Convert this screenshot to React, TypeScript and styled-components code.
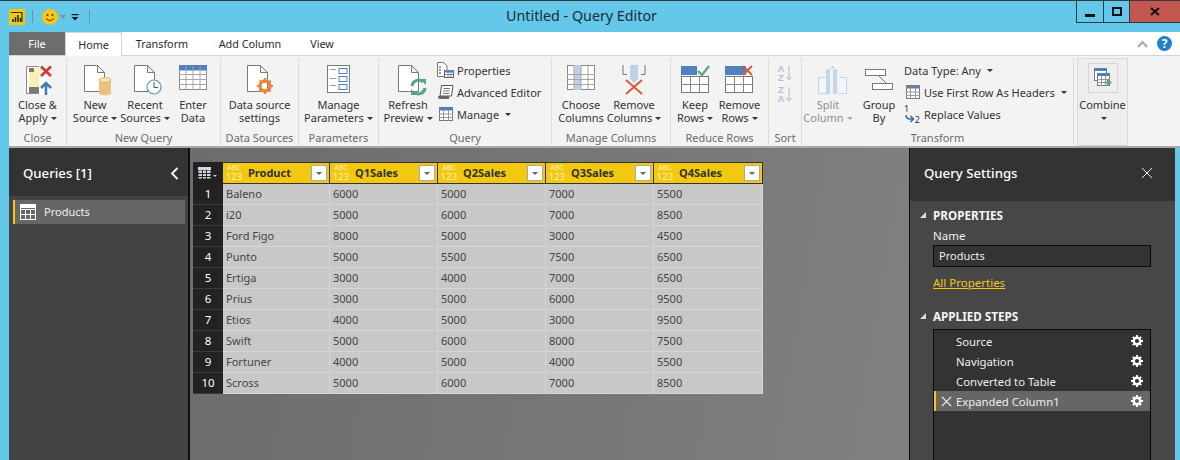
import React from "react";
import styled, { createGlobalStyle } from "styled-components";

const GlobalStyle = createGlobalStyle`
  html, body { margin: 0; padding: 0; height: 460px; overflow: hidden; background: #63c8ea; }
  body { font-family: "Noto Sans", "Open Sans", sans-serif; font-size: 12px; }
  * { box-sizing: border-box; }
`;

const Window = styled.div`
  width: 1180px;
  height: 460px;
  display: flex;
  flex-direction: column;
  overflow: hidden;
  background: #63c8ea;
  border-top: 1px solid #3a3a3a;
  padding-left: 9px;
`;
const TitleBar = styled.div`
  height: 31px;
  flex: none;
  display: flex;
  align-items: flex-start;
  position: relative;
`;
const QuickAccess = styled.div`
  width: 90px;
  height: 31px;
  display: flex;
  align-items: center;
`;
const QuickSep = styled.div<{ $m: number }>`
  width: 1px;
  height: 13px;
  margin-left: ${(p) => p.$m}px;
  background: #6b8f9d;
`;
const SmileySlot = styled.div`
  margin-left: 9px;
  display: flex;
`;
const QuickCaret = styled.span`
  margin-left: 2px;
  width: 0;
  height: 0;
  border-left: 3.5px solid transparent;
  border-right: 3.5px solid transparent;
  border-top: 4px solid #7d8f98;
`;
const CustomizeSlot = styled.div`
  margin-left: 5px;
  display: flex;
`;
const Title = styled.div`
  position: absolute;
  left: 497px;
  top: 3px;
  font-size: 14.3px;
  line-height: 24px;
  color: #1d2b33;
`;
const WinControls = styled.div`
  margin-left: auto;
  display: flex;
  height: 22px;
  border-left: 1px solid #2c3a40;
  border-bottom: 1px solid #2c3a40;
`;
const WinButton = styled.div<{ $w: number; $bg?: string }>`
  width: ${(p) => p.$w}px;
  background: ${(p) => p.$bg || "transparent"};
  border-right: 1px solid #2c3a40;
  display: flex;
  align-items: center;
  justify-content: center;
  &:last-child { border-right: none; }
`;
const Tabs = styled.div`
  height: 24px;
  flex: none;
  background: #fff;
  display: flex;
  align-items: stretch;
  border-bottom: 1px solid #d2d2d2;
  position: relative;
`;
const FileTab = styled.div`
  width: 56px;
  height: 23px;
  background: #6d6d6d;
  color: #fff;
  display: flex;
  align-items: center;
  justify-content: center;
  font-size: 10.8px;
`;
const Tab = styled.div<{ $active?: boolean; $w: number }>`
  width: ${(p) => p.$w}px;
  height: ${(p) => (p.$active ? "24px" : "23px")};
  display: flex;
  align-items: center;
  justify-content: center;
  font-size: 10.8px;
  color: #2b2b2b;
  background: #fff;
  z-index: 1;
  border: ${(p) => (p.$active ? "1px solid #d2d2d2" : "none")};
  border-bottom: none;
`;
const TabEnd = styled.div`
  margin-left: auto;
  display: flex;
  align-items: center;
  gap: 8px;
  padding-right: 8px;
`;
const HelpIcon = styled.div`
  width: 15px;
  height: 15px;
  border-radius: 50%;
  background: #1f7fd1;
  color: #fff;
  font-size: 12px;
  font-weight: 700;
  line-height: 15px;
  text-align: center;
`;
const Ribbon = styled.div`
  height: 92px;
  flex: none;
  background: #f3f3f3;
  border-bottom: 2px solid #a8a8a8;
  display: flex;
  padding-top: 2px;
`;
const Group = styled.div<{ $w: number }>`
  width: ${(p) => p.$w}px;
  flex: none;
  height: 87px;
  display: flex;
  flex-direction: column;
  border-right: 1px solid #dcdcdc;
`;
const GroupBody = styled.div`
  flex: 1;
  display: flex;
  min-height: 0;
`;
const GroupLabel = styled.div`
  height: 15px;
  line-height: 15px;
  text-align: center;
  font-size: 11px;
  color: #6a6a6a;
  white-space: nowrap;
`;
const BigButton = styled.div<{ $w: number; $disabled?: boolean }>`
  width: ${(p) => p.$w}px;
  flex: none;
  display: flex;
  flex-direction: column;
  align-items: center;
  font-size: 11px;
  line-height: 13px;
  color: ${(p) => (p.$disabled ? "#8f8f8f" : "#333")};
  white-space: nowrap;
  text-align: center;
`;
const IconSlot = styled.div<{ $nudge?: number }>`
  height: 40px;
  padding-top: 7px;
  padding-left: ${(p) => p.$nudge || 0}px;
  flex: none;
  display: flex;
  justify-content: center;
  align-items: flex-start;
`;
const Caret = styled.span<{ $light?: boolean }>`
  display: inline-block;
  width: 0;
  height: 0;
  margin-left: 3px;
  vertical-align: 2px;
  border-left: 3px solid transparent;
  border-right: 3px solid transparent;
  border-top: 3px solid ${(p) => (p.$light ? "#aaa" : "#333")};
`;
const SmallColumn = styled.div<{ $w: number }>`
  width: ${(p) => p.$w}px;
  flex: none;
  display: flex;
  flex-direction: column;
  padding-top: 1px;
`;
const SmallButton = styled.div`
  height: 22px;
  display: flex;
  align-items: center;
  gap: 3px;
  font-size: 11px;
  color: #333;
  white-space: nowrap;
`;
const SmallIcon = styled.div`
  width: 17px;
  height: 17px;
  flex: none;
  display: flex;
  align-items: center;
  justify-content: center;
`;
const ReplaceIcon = styled.div`
  width: 17px;
  height: 20px;
  position: relative;
  flex: none;
  font-size: 9px;
  line-height: 9px;
  color: #333;
`;
const ReplaceOne = styled.span`
  position: absolute;
  left: 0;
  top: 0;
`;
const ReplaceTwo = styled.span`
  position: absolute;
  right: 1px;
  bottom: 0;
`;
const SortStack = styled.div`
  display: flex;
  flex-direction: column;
  gap: 1px;
  padding: 5px 0 0 8px;
`;
const SortRow = styled.div`
  height: 20px;
  display: flex;
  gap: 1px;
  align-items: center;
`;
const SortLetters = styled.div`
  width: 8px;
  font-family: "Liberation Sans", Arial, sans-serif;
  font-size: 9.5px;
  line-height: 9.5px;
  font-weight: 700;
  color: #b3c0d2;
  text-align: center;
`;
const CombineBox = styled.div`
  width: 51px;
  height: 88px;
  margin-left: 3px;
  background: #eeeeee;
  border: 1px solid #d8d8d8;
  display: flex;
  flex-direction: column;
  align-items: center;
  font-size: 11px;
  line-height: 13px;
  color: #333;
`;
const CombineIcon = styled.div`
  width: 30px;
  height: 30px;
  margin: 4px 0 5px;
  border: 1px solid #d4d4d4;
  display: flex;
  align-items: center;
  justify-content: center;
`;
const Body = styled.div`
  flex: 1;
  min-height: 0;
  display: flex;
  margin-right: 5px;
`;
const LeftPane = styled.div`
  width: 181px;
  flex: none;
  background: #444;
  border-right: 2px solid #0e0e0e;
`;
const PaneHeader = styled.div<{ $h: number; $pad: number }>`
  height: ${(p) => p.$h}px;
  background: #333;
  color: #fff;
  font-size: 13.2px;
  font-weight: 500;
  line-height: 20px;
  display: flex;
  align-items: flex-start;
  justify-content: space-between;
  padding: 15px ${(p) => p.$pad}px 0 14px;
  svg { margin-top: 4px; }
`;
const QueryItem = styled.div`
  margin: 4px 3px 0 4px;
  height: 24px;
  background: #666;
  border-left: 2px solid #f2c811;
  color: #eee;
  font-size: 11px;
  display: flex;
  align-items: center;
  gap: 8px;
  padding: 0 0 1px 5px;
`;
const Center = styled.div`
  width: 719px;
  flex: none;
  background: linear-gradient(100deg, #6c6c6c, #808080);
  padding: 14px 0 0 3px;
`;
const Grid = styled.div`
  width: 570px;
  display: grid;
  grid-template-columns: 30px 107px 108px 108px 108px 109px;
  grid-template-rows: 22px repeat(10, 21px);
`;
const Corner = styled.div`
  background: #222;
  display: flex;
  align-items: center;
  justify-content: center;
`;
const HeadCell = styled.div`
  background: #f2c811;
  border-right: 1px solid #333;
  border-top: 1px solid #333;
  border-bottom: 1px solid #333;
  display: flex;
  align-items: center;
  padding: 0 2px 0 2px;
  color: #333;
  font-size: 11px;
  font-weight: 700;
`;
const HeadText = styled.span`
  margin-top: -2px;
`;
const TypeBadge = styled.div`
  width: 18px;
  flex: none;
  color: #fdf3b8;
  text-align: center;
  margin-right: 5px;
`;
const TypeAbc = styled.div`
  font-size: 7px;
  line-height: 8px;
  font-weight: 400;
`;
const Type123 = styled.div`
  font-size: 9.5px;
  line-height: 10px;
  font-weight: 400;
`;
const FilterButton = styled.div`
  margin-left: auto;
  width: 16px;
  height: 16px;
  background: #fff;
  border: 1px solid #a8a8a8;
  display: flex;
  align-items: center;
  justify-content: center;
  &::after {
    content: "";
    border-left: 3px solid transparent;
    border-right: 3px solid transparent;
    border-top: 3px solid #666;
  }
`;
const RowNum = styled.div`
  background: #222;
  color: #fff;
  font-size: 11.5px;
  display: flex;
  align-items: center;
  justify-content: center;
  padding-bottom: 1px;
  border-bottom: 1px solid #3a3a3a;
`;
const Cell = styled.div`
  background: #c8c8c8;
  color: #444;
  font-size: 11px;
  display: flex;
  align-items: center;
  padding: 0 0 1px 3px;
  border-right: 1px solid #d6d6d6;
  border-bottom: 1px solid #d6d6d6;
`;
const RightPane = styled.div`
  flex: 1;
  background: #474747;
  border-left: 1px solid #0e0e0e;
  color: #fff;
`;
const SettingsBody = styled.div`
  padding: 6px 24px 0 10px;
`;
const SectionTitle = styled.div`
  display: flex;
  align-items: center;
  gap: 7px;
  height: 16px;
  font-size: 11.7px;
  font-weight: 700;
  color: #f4f4f4;
`;
const SectionArrow = styled.span`
  width: 0;
  height: 0;
  border-left: 6px solid transparent;
  border-bottom: 6px solid #ddd;
`;
const Indented = styled.div`
  margin-left: 13px;
`;
const NameLabel = styled.div`
  margin-top: 4px;
  height: 18px;
  line-height: 18px;
  font-size: 11.5px;
  color: #eee;
`;
const NameInput = styled.div`
  width: 218px;
  height: 22px;
  border: 1px solid #0b0b0b;
  background: #333;
  padding-left: 5px;
  line-height: 20px;
  font-size: 11px;
  color: #eee;
`;
const PropsLink = styled.div`
  margin: 7px 0 16px;
  height: 18px;
  line-height: 18px;
  font-size: 11.5px;
  color: #f2c811;
  text-decoration: underline;
`;
const StepList = styled.div`
  width: 218px;
  height: 140px;
  margin-top: 5px;
  border: 1px solid #0b0b0b;
  background: #333;
  padding-top: 1px;
`;
const Step = styled.div<{ $selected?: boolean }>`
  height: 20px;
  display: flex;
  align-items: center;
  font-size: 11.3px;
  color: #eee;
  padding-right: 7px;
  background: ${(p) => (p.$selected ? "#666" : "transparent")};
  border-left: 2px solid ${(p) => (p.$selected ? "#f2c811" : "transparent")};
`;
const StepIcon = styled.div`
  width: 20px;
  flex: none;
  display: flex;
  justify-content: center;
`;
const StepGear = styled.span`
  margin-left: auto;
  display: flex;
`;

const Page = ({ x = 0, w = 21, h = 27 }: { x?: number; w?: number; h?: number }) => (
  <path
    d={`M${x + 0.5} 0.5H${x + w - 7.5}L${x + w - 0.5} 7.5V${h - 0.5}H${x + 0.5}ZM${x + w - 7.5} 0.5V7.5H${x + w - 0.5}`}
    fill="#fff"
    stroke="#7a7a7a"
  />
);

const CloseApplyIcon = () => (
  <svg width="27" height="31" viewBox="0 0 27 31">
    <path d="M13 1.500H0.500V28.500H13" fill="#fff" stroke="#8a8a8a" />
    <path d="M3 3H13V13L20 18V22H3Z" fill="#fdeeb5" />
    <path d="M13 12L24 17V30H13Z" fill="#fff" />
    <rect x="3" y="3" width="5" height="4" fill="#7a7a7a" />
    <rect x="3" y="22" width="10" height="6" fill="#7a7a7a" />
    <path d="M15 1.500L25 11M25 1.500L15 11" stroke="#cf3a33" strokeWidth="2.600" />
    <path d="M20 30V18M15 23L20 18L25 23" fill="none" stroke="#3f7cb5" strokeWidth="2.600" />
  </svg>
);
const NewSourceIcon = () => (
  <svg width="28" height="31" viewBox="0 0 28 31">
    <Page />
    <path d="M15 15H27V28C27 31 15 31 15 28Z" fill="#e8c27e" />
    <ellipse cx="21" cy="15" rx="6" ry="2.400" fill="#f6e1b4" stroke="#e0b669" />
  </svg>
);
const RecentIcon = () => (
  <svg width="28" height="31" viewBox="0 0 28 31">
    <Page />
    <circle cx="20" cy="22" r="7" fill="#fff" stroke="#5a93c6" strokeWidth="1.200" />
    <path d="M20 17V22.500H24" fill="none" stroke="#555" />
  </svg>
);
const TableIcon = ({ head = "#4f81bd", col }: { head?: string; col?: boolean }) => (
  <svg width="29" height="26" viewBox="0 0 29 26">
    <rect x="0.500" y="0.500" width="27" height="24" fill="#fff" stroke="#8a8a8a" />
    {col && <rect x="7" y="0" width="7" height="25" fill="#bcd2e8" />}
    {!col && <rect x="0" y="0" width="28" height="5.500" fill={head} />}
    <path d="M0 9.500H28M0 14.500H28M0 19.500H28M7 1V25M14 1V25M21 1V25" stroke="#a5a5a5" />
  </svg>
);
const DataSourceIcon = () => (
  <svg width="30" height="30" viewBox="0 0 30 30">
    <Page />
    <circle cx="18" cy="21" r="5" fill="none" stroke="#e8873a" strokeWidth="3.400" />
    <path d="M18 13V29M10 21H26M12.500 15.500L23.500 26.500M23.500 15.500L12.500 26.500" stroke="#e8873a" strokeWidth="2" strokeDasharray="2.500 11" />
  </svg>
);
const ParamsIcon = () => (
  <svg width="24" height="28" viewBox="0 0 24 28">
    <rect x="0.500" y="0.500" width="22" height="27" fill="#fff" stroke="#7a7a7a" />
    <path d="M3 4.500H9M3 13.500H9M3 20.500H9" stroke="#999" />
    <rect x="12" y="3.500" width="8" height="5" fill="#fff" stroke="#4f81bd" />
    <rect x="12" y="11.500" width="8" height="5" fill="#fff" stroke="#4f81bd" />
    <rect x="12" y="19.500" width="8" height="5" fill="#fff" stroke="#4f81bd" />
  </svg>
);
const RefreshIcon = () => (
  <svg width="29" height="31" viewBox="0 0 29 31">
    <Page />
    <path d="M14 21A6.500 6.500 0 0 1 25 17M27 23A6.500 6.500 0 0 1 16 27" fill="none" stroke="#52a58a" strokeWidth="3" />
    <path d="M22 14H28V20ZM19 30H13V24Z" fill="#52a58a" />
  </svg>
);
const PropertiesIcon = () => (
  <svg width="17" height="16" viewBox="0 0 17 16">
    <path d="M0.500 0.500H6.500L10 4V14.500H0.500Z" fill="#fff" stroke="#777" />
    <path d="M2 5H4M2 8H4M2 11H4" stroke="#777" strokeWidth="1.400" />
    <rect x="7.500" y="8.500" width="9" height="7" fill="#fff" stroke="#666" />
    <rect x="7" y="8" width="10" height="2.500" fill="#4f81bd" />
    <path d="M11 9V15M14 9V15M8 12.500H16" stroke="#888" />
  </svg>
);
const EditorIcon = () => (
  <svg width="16" height="16" viewBox="0 0 16 16">
    <path d="M3.500 1.500H15L13.500 12H2Z" fill="#fff" stroke="#555" />
    <path d="M5.500 4.500H12M5 7H11.500M5 9.500H11" stroke="#777" />
    <path d="M0 12H11V15H2Q0 15 0 13Z" fill="#666" />
  </svg>
);
const MiniTable = ({ head = "#4f81bd" }: { head?: string }) => (
  <svg width="14" height="14" viewBox="0 0 14 14">
    <rect x="0.500" y="0.500" width="13" height="13" fill="#fff" stroke="#777" />
    <rect x="0" y="0" width="14" height="3.500" fill={head} />
    <path d="M0 7H14M0 10.500H14M4.500 3V14M9.500 3V14" stroke="#999" />
  </svg>
);
const RemoveColumnsIcon = () => (
  <svg width="24" height="30" viewBox="0 0 24 30">
    <path d="M1 0V9.500H5M23 0V9.500H19" fill="none" stroke="#777" />
    <path d="M8 0H16V14L12 18L8 14Z" fill="#bcd2e8" />
    <path d="M4 15L20 29M20 15L4 29" stroke="#d95b3a" strokeWidth="2" />
  </svg>
);
const RowsIcon = ({ remove }: { remove?: boolean }) => (
  <svg width="29" height="29" viewBox="0 0 29 29">
    <rect x="0" y="1" width={remove ? 21 : 16} height="9" fill="#4f81bd" />
    <rect x="0.500" y="11.500" width="27" height="16" fill="#fff" stroke="#777" />
    <path d="M0 19.500H28M9.500 12V28M18.500 12V28" stroke="#888" />
    {remove ? (
      <path d="M18 1L27 10M27 1L18 10" stroke="#d95b3a" strokeWidth="2" />
    ) : (
      <path d="M17 6L21 10L28 1" fill="none" stroke="#5da58c" strokeWidth="2.400" />
    )}
  </svg>
);
const SortArrow = () => (
  <svg width="6" height="15" viewBox="0 0 6 15">
    <path d="M3 0V14M0.500 11L3 14L5.500 11" fill="none" stroke="#aebccf" />
  </svg>
);
const SplitIcon = () => (
  <svg width="29" height="29" viewBox="0 0 29 29">
    <path d="M14.500 1L18 4H11Z" fill="#c4c4c4" />
    <rect x="0.500" y="12.500" width="28" height="16" fill="#f1f6fc" stroke="#c4d4e4" />
    <rect x="8.500" y="3" width="12" height="26" fill="#f3f3f3" />
    <rect x="8" y="4" width="4" height="25" fill="#c4d6e8" />
    <rect x="15" y="4" width="4" height="25" fill="#c4d6e8" />
  </svg>
);
const GroupIcon = () => (
  <svg width="29" height="26" viewBox="0 0 29 26">
    <rect x="0.500" y="4.500" width="20" height="6" fill="#fff" stroke="#777" />
    <rect x="7.500" y="18.500" width="20" height="6" fill="#fff" stroke="#777" />
    <path d="M14 11L21 18" stroke="#777" />
  </svg>
);
const CombineGlyph = () => (
  <svg width="18" height="20" viewBox="0 0 18 20">
    <rect x="0.500" y="0.500" width="12" height="12" fill="#fff" stroke="#777" />
    <rect x="0" y="0" width="13" height="3" fill="#4f81bd" />
    <rect x="3.500" y="5.500" width="12" height="12" fill="#fff" stroke="#777" />
    <rect x="3" y="5" width="13" height="3" fill="#4f81bd" />
    <path d="M3 11.500H16M3 14.500H16M7.500 8V18M11.500 8V18" stroke="#999" />
    <path d="M14 11V18M10.500 14.500H17.500" stroke="#5da58c" strokeWidth="2" />
  </svg>
);
const Gear = () => (
  <svg width="12" height="12" viewBox="0 0 12 12">
    <circle cx="6" cy="6" r="3.300" fill="none" stroke="#fff" strokeWidth="2.400" />
    <path d="M6 0V12M0 6H12M1.800 1.800L10.200 10.200M10.200 1.800L1.800 10.200" stroke="#fff" strokeWidth="1.800" strokeDasharray="2 8" />
  </svg>
);
const WhiteTable = () => (
  <svg width="16" height="16" viewBox="0 0 16 16">
    <rect x="0.500" y="0.500" width="15" height="15" fill="none" stroke="#fff" />
    <path d="M0 5.500H16M0 10.500H16M5.500 5V16M10.500 5V16" stroke="#fff" />
    <rect x="0" y="0" width="16" height="4" fill="#fff" />
  </svg>
);
const CornerGlyph = () => (
  <svg width="20" height="12" viewBox="0 0 20 12">
    <rect x="0" y="0" width="13" height="3" fill="#cfd9e6" />
    <rect x="0.500" y="3.500" width="12" height="8" fill="#cfd9e6" />
    <path d="M0 6.500H13M0 9.500H13M4.500 3V12M8.500 3V12" stroke="#222" />
    <path d="M15 8H19L17 10Z" fill="#ccc" />
  </svg>
);
const PbiLogo = () => (
  <svg width="16" height="16" viewBox="0 0 16 16">
    <rect width="16" height="16" fill="#f2c811" />
    <path d="M2 3.500H13V13" fill="none" stroke="#3a3000" strokeWidth="1.200" />
    <path d="M4 13V10M6.500 13V8M9 13V6M11.500 13V9" stroke="#222" strokeWidth="1.500" />
  </svg>
);
const Smiley = () => (
  <svg width="16" height="16" viewBox="0 0 16 16">
    <circle cx="8" cy="8" r="8" fill="#f5c518" />
    <circle cx="5.500" cy="6" r="1" fill="#4a3b00" />
    <circle cx="10.500" cy="6" r="1" fill="#4a3b00" />
    <path d="M4 9.500Q8 13.500 12 9.500" fill="none" stroke="#4a3b00" />
  </svg>
);
const Customize = () => (
  <svg width="8" height="8" viewBox="0 0 8 8">
    <rect x="0.500" y="1" width="7" height="1.200" fill="#111" />
    <path d="M0.500 4H7.500L4 7.500Z" fill="#111" />
  </svg>
);
const CrossIcon = ({ size, color, weight = 1 }: { size: number; color: string; weight?: number }) => (
  <svg width={size} height={size} viewBox="0 0 12 12">
    <path d="M1 1L11 11M11 1L1 11" stroke={color} strokeWidth={weight} />
  </svg>
);

const columns = ["Product", "Q1Sales", "Q2Sales", "Q3Sales", "Q4Sales"];
const rows = [
  ["Baleno", "6000", "5000", "7000", "5500"],
  ["i20", "5000", "6000", "7000", "8500"],
  ["Ford Figo", "8000", "5000", "3000", "4500"],
  ["Punto", "5000", "5500", "7500", "6500"],
  ["Ertiga", "3000", "4000", "7000", "6500"],
  ["Prius", "3000", "5000", "6000", "9500"],
  ["Etios", "4000", "5000", "3000", "9500"],
  ["Swift", "5000", "6000", "8000", "7500"],
  ["Fortuner", "4000", "5000", "4000", "5500"],
  ["Scross", "5000", "6000", "7000", "8500"],
];
const steps = ["Source", "Navigation", "Converted to Table", "Expanded Column1"];

const Big = ({
  w,
  icon,
  line1,
  line2,
  caret,
  disabled,
  nudge,
}: {
  w: number;
  icon: React.ReactNode;
  line1: string;
  line2: string;
  caret?: boolean;
  disabled?: boolean;
  nudge?: number;
}) => (
  <BigButton $w={w} $disabled={disabled}>
    <IconSlot $nudge={nudge}>{icon}</IconSlot>
    <div>{line1}</div>
    <div>
      {line2}
      {caret && <Caret $light={disabled} />}
    </div>
  </BigButton>
);

export default function App() {
  return (
    <Window>
      <GlobalStyle />
      <TitleBar>
        <QuickAccess>
          <PbiLogo />
          <QuickSep $m={7} />
          <SmileySlot><Smiley /></SmileySlot>
          <QuickCaret />
          <CustomizeSlot><Customize /></CustomizeSlot>
          <QuickSep $m={10} />
        </QuickAccess>
        <Title>Untitled - Query Editor</Title>
        <WinControls>
          <WinButton $w={27}>
            <svg width="10" height="10" viewBox="0 0 10 10">
              <rect x="0" y="7" width="10" height="3" fill="#111" />
            </svg>
          </WinButton>
          <WinButton $w={26}>
            <svg width="10" height="9" viewBox="0 0 10 9">
              <rect x="1" y="1" width="8" height="7" fill="none" stroke="#111" strokeWidth="2" />
            </svg>
          </WinButton>
          <WinButton $w={50} $bg="#c1574f">
            <svg width="10" height="9" viewBox="0 0 10 9">
              <path d="M1 1L9 8M9 1L1 8" stroke="#111" strokeWidth="2" />
            </svg>
          </WinButton>
        </WinControls>
      </TitleBar>
      <Tabs>
        <FileTab>File</FileTab>
        <Tab $active $w={57}>Home</Tab>
        <Tab $w={80}>Transform</Tab>
        <Tab $w={96}>Add Column</Tab>
        <Tab $w={48}>View</Tab>
        <TabEnd>
          <svg width="13" height="8" viewBox="0 0 13 8">
            <path d="M2 7L6.500 2L11 7" fill="none" stroke="#a8a8a8" strokeWidth="2" />
          </svg>
          <HelpIcon>?</HelpIcon>
        </TabEnd>
      </Tabs>
      <Ribbon>
        <Group $w={58}>
          <GroupBody>
            <Big w={57} icon={<CloseApplyIcon />} line1="Close &" line2="Apply" caret nudge={4} />
          </GroupBody>
          <GroupLabel>Close</GroupLabel>
        </Group>
        <Group $w={154}>
          <GroupBody>
            <Big w={56} icon={<NewSourceIcon />} line1="New" line2="Source" caret nudge={5} />
            <Big w={44} icon={<RecentIcon />} line1="Recent" line2="Sources" caret nudge={5} />
            <Big w={52} icon={<TableIcon />} line1="Enter" line2="Data" />
          </GroupBody>
          <GroupLabel>New Query</GroupLabel>
        </Group>
        <Group $w={78}>
          <GroupBody>
            <Big w={77} icon={<DataSourceIcon />} line1="Data source" line2="settings" nudge={5} />
          </GroupBody>
          <GroupLabel>Data Sources</GroupLabel>
        </Group>
        <Group $w={80}>
          <GroupBody>
            <Big w={79} icon={<ParamsIcon />} line1="Manage" line2="Parameters" caret />
          </GroupBody>
          <GroupLabel>Parameters</GroupLabel>
        </Group>
        <Group $w={173}>
          <GroupBody>
            <Big w={58} icon={<RefreshIcon />} line1="Refresh" line2="Preview" caret nudge={9} />
            <SmallColumn $w={114}>
              <SmallButton><SmallIcon><PropertiesIcon /></SmallIcon>Properties</SmallButton>
              <SmallButton><SmallIcon><EditorIcon /></SmallIcon>Advanced Editor</SmallButton>
              <SmallButton><SmallIcon><MiniTable /></SmallIcon>Manage<Caret /></SmallButton>
            </SmallColumn>
          </GroupBody>
          <GroupLabel>Query</GroupLabel>
        </Group>
        <Group $w={119}>
          <GroupBody>
            <Big w={58} icon={<TableIcon col />} line1="Choose" line2="Columns" />
            <Big w={48} icon={<RemoveColumnsIcon />} line1="Remove" line2="Columns" caret />
          </GroupBody>
          <GroupLabel>Manage Columns</GroupLabel>
        </Group>
        <Group $w={98}>
          <GroupBody>
            <Big w={48} icon={<RowsIcon />} line1="Keep" line2="Rows" caret />
            <Big w={41} icon={<RowsIcon remove />} line1="Remove" line2="Rows" caret />
          </GroupBody>
          <GroupLabel>Reduce Rows</GroupLabel>
        </Group>
        <Group $w={33}>
          <GroupBody>
            <SortStack>
              <SortRow>
                <SortLetters>A<br />Z</SortLetters>
                <SortArrow />
              </SortRow>
              <SortRow>
                <SortLetters>Z<br />A</SortLetters>
                <SortArrow />
              </SortRow>
            </SortStack>
          </GroupBody>
          <GroupLabel>Sort</GroupLabel>
        </Group>
        <Group $w={272}>
          <GroupBody>
            <Big w={52} icon={<SplitIcon />} line1="Split" line2="Column" caret disabled nudge={8} />
            <Big w={50} icon={<GroupIcon />} line1="Group" line2="By" />
            <SmallColumn $w={168}>
              <SmallButton>Data Type: Any<Caret /></SmallButton>
              <SmallButton><SmallIcon><MiniTable head="#6b7f99" /></SmallIcon>Use First Row As Headers<Caret /></SmallButton>
              <SmallButton>
                <ReplaceIcon>
                  <ReplaceOne>1</ReplaceOne>
                  <svg width="17" height="20" viewBox="0 0 17 20">
                    <path d="M2 11Q2 15 6 15H9M6.500 12L9.500 15L6.500 18" fill="none" stroke="#2f6fa8" strokeWidth="1.600" />
                  </svg>
                  <ReplaceTwo>2</ReplaceTwo>
                </ReplaceIcon>
                Replace Values
              </SmallButton>
            </SmallColumn>
          </GroupBody>
          <GroupLabel>Transform</GroupLabel>
        </Group>
        <CombineBox>
          <CombineIcon><CombineGlyph /></CombineIcon>
          <div>Combine</div>
          <div><Caret /></div>
        </CombineBox>
      </Ribbon>
      <Body>
        <LeftPane>
          <PaneHeader $h={48} $pad={9}>
            Queries [1]
            <svg width="9" height="13" viewBox="0 0 9 13">
              <path d="M7.500 1L2 6.500L7.500 12" fill="none" stroke="#fff" strokeWidth="1.800" />
            </svg>
          </PaneHeader>
          <QueryItem><WhiteTable />Products</QueryItem>
        </LeftPane>
        <Center>
          <Grid>
            <Corner><CornerGlyph /></Corner>
            {columns.map((c) => (
              <HeadCell key={c}>
                <TypeBadge>
                  <TypeAbc>ABC</TypeAbc>
                  <Type123>123</Type123>
                </TypeBadge>
                <HeadText>{c}</HeadText>
                <FilterButton />
              </HeadCell>
            ))}
            {rows.map((r, i) => (
              <React.Fragment key={r[0]}>
                <RowNum>{i + 1}</RowNum>
                {r.map((v, j) => (
                  <Cell key={j}>{v}</Cell>
                ))}
              </React.Fragment>
            ))}
          </Grid>
        </Center>
        <RightPane>
          <PaneHeader $h={53} $pad={22}>
            Query Settings
            <CrossIcon size={12} color="#eee" />
          </PaneHeader>
          <SettingsBody>
            <SectionTitle><SectionArrow />PROPERTIES</SectionTitle>
            <Indented>
              <NameLabel>Name</NameLabel>
              <NameInput>Products</NameInput>
              <PropsLink>All Properties</PropsLink>
            </Indented>
            <SectionTitle><SectionArrow />APPLIED STEPS</SectionTitle>
            <Indented>
              <StepList>
                {steps.map((s, i) => (
                  <Step key={s} $selected={i === 3}>
                    <StepIcon>{i === 3 && <CrossIcon size={11} color="#eee" weight={1.4} />}</StepIcon>
                    {s}
                    <StepGear><Gear /></StepGear>
                  </Step>
                ))}
              </StepList>
            </Indented>
          </SettingsBody>
        </RightPane>
      </Body>
    </Window>
  );
}
